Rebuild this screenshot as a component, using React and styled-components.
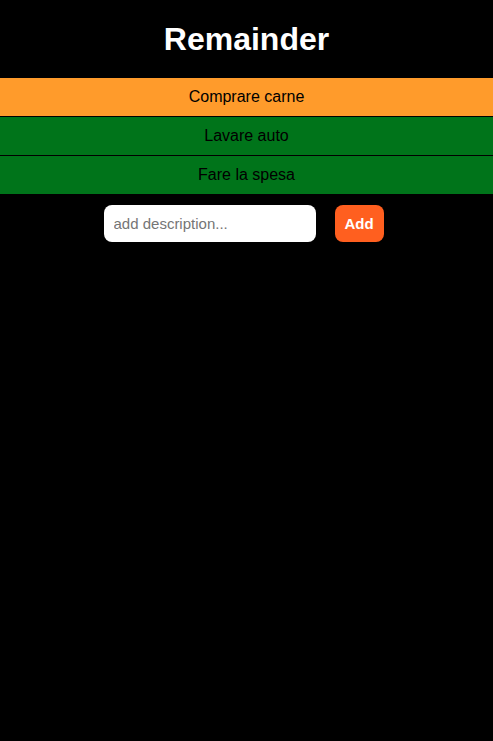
import React from 'react';
import styled, { createGlobalStyle } from 'styled-components';

const GlobalStyle = createGlobalStyle`
	html, body {
		margin: 0;
		background: #000;
		font-family: "Liberation Sans", Arial, sans-serif;
	}
`;

const StyledPage = styled.div`
	min-height: 741px;
	background: #000;
`;

const StyledTitle = styled.h1`
	margin: 0;
	height: 78px;
	display: flex;
	align-items: center;
	justify-content: center;
	color: #fff;
	font-size: 32px;
	font-weight: bold;
`;

const StyledList = styled.div`
	display: flex;
	flex-direction: column;
`;

const StyledItem = styled.div`
	height: 38px;
	display: flex;
	align-items: center;
	justify-content: center;
	font-size: 16px;
	color: #000;
	background: ${props => props.done ? '#00741a' : '#ff9b2b'};
	border-bottom: 1px solid #000;
	&:last-child {
		border-bottom: none;
	}
`;

const StyledForm = styled.div`
	display: flex;
	justify-content: center;
	align-items: center;
	gap: 19px;
	margin-top: 11px;
	padding-right: 6px;
`;

const StyledInput = styled.input`
	box-sizing: border-box;
	width: 212px;
	height: 37px;
	border: none;
	border-radius: 8px;
	padding: 0 10px;
	font-family: inherit;
	font-size: 15px;
	outline: none;
	&::placeholder {
		color: #757575;
	}
`;

const StyledButton = styled.button`
	height: 37px;
	width: 49px;
	border: none;
	border-radius: 8px;
	background: #ff5f1f;
	color: #fff;
	font-family: inherit;
	font-weight: bold;
	font-size: 15px;
	padding: 0;
`;

const todos = [
	{description: 'Comprare carne', done: false},
	{description: 'Lavare auto', done: true},
	{description: 'Fare la spesa', done: true},
];

const App = () => {
	return (
		<StyledPage>
			<GlobalStyle/>
			<StyledTitle>Remainder</StyledTitle>
			<StyledList>
				{todos.map(todo => (
					<StyledItem key={todo.description} done={todo.done}>{todo.description}</StyledItem>
				))}
			</StyledList>
			<StyledForm>
				<StyledInput placeholder='add description...'/>
				<StyledButton>Add</StyledButton>
			</StyledForm>
		</StyledPage>
	)
};

export default App;
